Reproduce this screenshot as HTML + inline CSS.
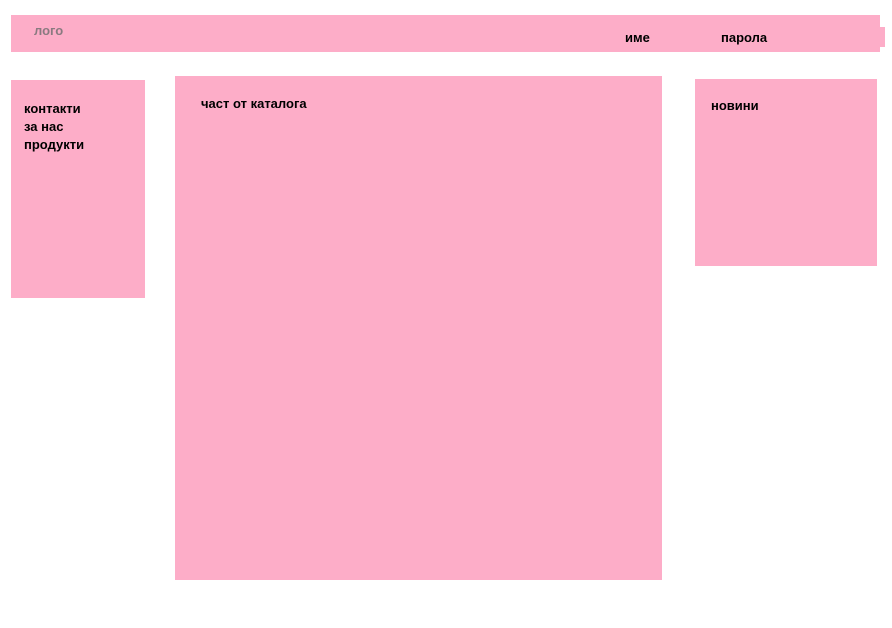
<!DOCTYPE html>
<html><head><meta charset="utf-8"><style>
body{margin:0;width:892px;height:628px;background:#fff;position:relative;overflow:hidden;font-family:"Liberation Sans",sans-serif;font-weight:bold;font-size:13px;color:#000}
.b{position:absolute;background:#fdadc8}
.t{position:absolute;white-space:nowrap}
</style></head><body>
<div class="b" style="left:11px;top:15px;width:869px;height:37px"></div>
<div class="b" style="left:878px;top:27px;width:7px;height:20px"></div>
<div class="t" style="left:34px;top:23px;color:#8a7a80">лого</div>
<div class="t" style="left:625px;top:30px">име</div>
<div class="t" style="left:721px;top:30px">парола</div>
<div class="b" style="left:11px;top:80px;width:134px;height:218px"></div>
<div class="t" style="left:24px;top:100px;line-height:18px">контакти<br>за нас<br>продукти</div>
<div class="b" style="left:175px;top:76px;width:487px;height:504px"></div>
<div class="t" style="left:201px;top:96px">част от каталога</div>
<div class="b" style="left:695px;top:79px;width:182px;height:187px"></div>
<div class="t" style="left:711px;top:98px">новини</div>
</body></html>
